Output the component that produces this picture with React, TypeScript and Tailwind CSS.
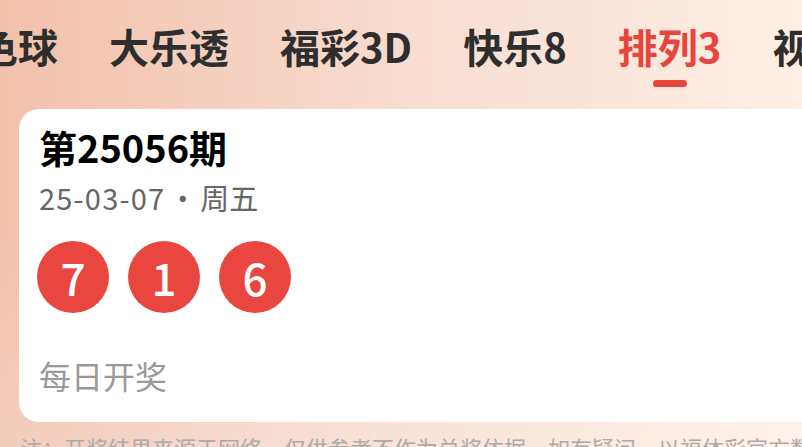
import { useState } from 'react';

const tabs = ['双色球', '大乐透', '福彩3D', '快乐8', '排列3', '视频'];

const CJK = { fontFamily: '"Noto Sans CJK SC", "Noto Sans", sans-serif' };

const Ball = ({ n }: { n: number }) => (
  <div className="w-[72px] h-[72px] rounded-full bg-[#e8463e] flex items-center justify-center text-white text-[44px] font-medium leading-none">
    {n}
  </div>
);

const App = () => {
  const [active] = useState(4);

  return (
    <div
      className="relative w-[802px] h-[447px] overflow-hidden bg-gradient-to-r from-[#f1c1ab] via-[#f8dccf] to-[#fdefe5]"
      style={CJK}
    >
      <div className="absolute inset-0 bg-gradient-to-b from-transparent via-transparent to-white/20" />
      <div className="relative">
        {/* tab bar */}
        <nav className="flex gap-[51px] ml-[-62px] pt-[26px] whitespace-nowrap">
          {tabs.map((t, i) => (
            <div key={t} className="flex flex-col items-center shrink-0">
              <span
                className={`text-[40px] font-bold leading-none ${
                  i === active ? 'text-[#e8453c]' : 'text-[#2e2e2e]'
                }`}
              >
                {t}
              </span>
              <span
                className={`mt-[14px] h-[7px] w-[34px] rounded-full ${
                  i === active ? 'bg-[#e8453c]' : 'bg-transparent'
                }`}
              />
            </div>
          ))}
        </nav>

        {/* draw card */}
        <div className="mt-[22px] ml-[19px] w-[820px] rounded-[20px] bg-white pl-[20px] pt-[19px] pb-[31px]">
          <h1 className="text-[38px] font-bold leading-none text-black">第25056期</h1>
          <p className="mt-[17px] flex items-center text-[29px] leading-none text-[#666666]">
            <span className="tracking-[1.2px]">25-03-07</span>
            <span className="mx-[3px]">·</span>
            <span>周五</span>
          </p>
          <div className="mt-[29px] flex gap-[19px] -ml-[2px]">
            <Ball n={7} />
            <Ball n={1} />
            <Ball n={6} />
          </div>
          <p className="mt-[46px] text-[32px] leading-none text-[#999999]">每日开奖</p>
        </div>

        <p className="mt-[14px] ml-[20px] text-[22px] leading-none text-[#aaaaaa] whitespace-nowrap">
          注：开奖结果来源于网络，仅供参考不作为兑奖依据，如有疑问，以福体彩官方数据为准
        </p>
      </div>
    </div>
  );
};

export default App;
